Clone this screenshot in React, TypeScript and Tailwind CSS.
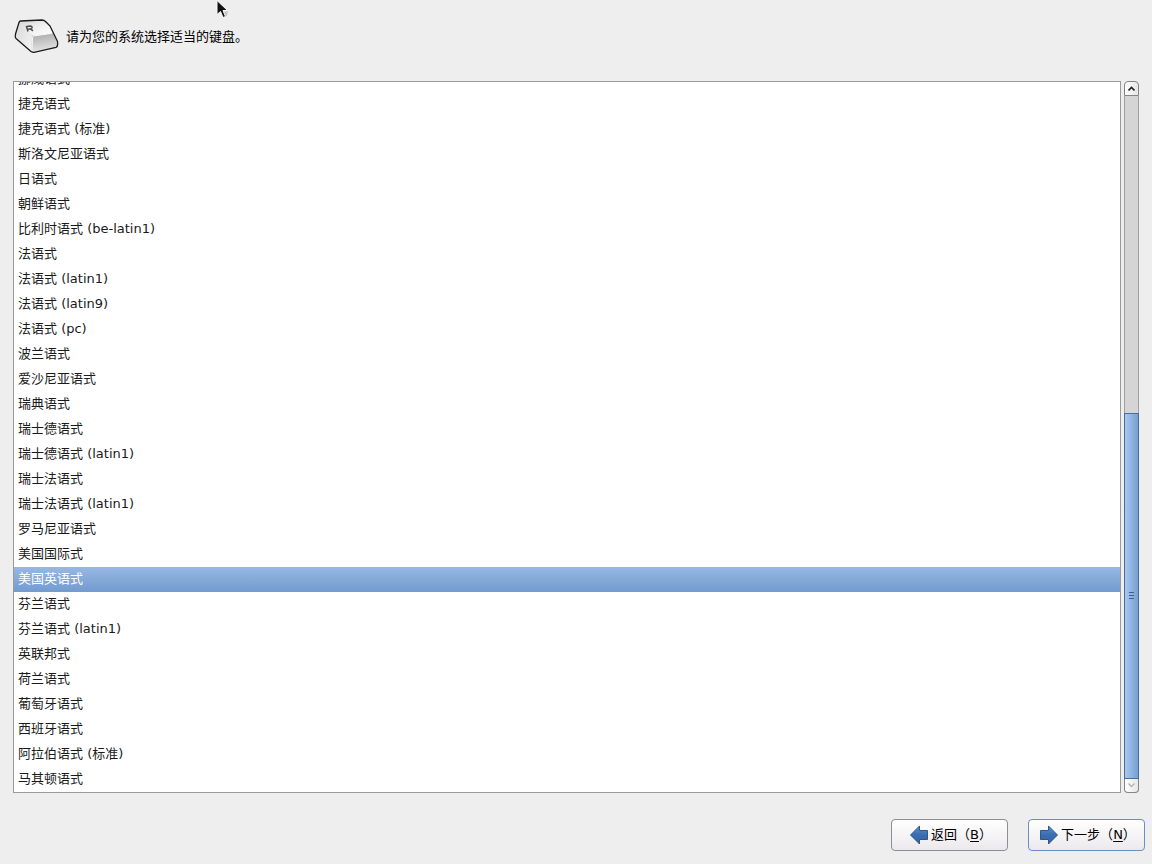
import { useState } from "react";
import { clsx } from "clsx";

const KEYBOARDS = [
  "挪威语式",
  "捷克语式",
  "捷克语式 (标准)",
  "斯洛文尼亚语式",
  "日语式",
  "朝鲜语式",
  "比利时语式 (be-latin1)",
  "法语式",
  "法语式 (latin1)",
  "法语式 (latin9)",
  "法语式 (pc)",
  "波兰语式",
  "爱沙尼亚语式",
  "瑞典语式",
  "瑞士德语式",
  "瑞士德语式 (latin1)",
  "瑞士法语式",
  "瑞士法语式 (latin1)",
  "罗马尼亚语式",
  "美国国际式",
  "美国英语式",
  "芬兰语式",
  "芬兰语式 (latin1)",
  "英联邦式",
  "荷兰语式",
  "葡萄牙语式",
  "西班牙语式",
  "阿拉伯语式 (标准)",
  "马其顿语式",
];

function KeycapIcon() {
  return (
    <svg width="45" height="36" viewBox="0 0 45 36" aria-hidden="true">
      <defs>
        <linearGradient id="cap-top" x1="0" y1="0" x2="1" y2="1">
          <stop offset="0" stopColor="#d6d6d6" />
          <stop offset="0.5" stopColor="#f0f0f0" />
          <stop offset="1" stopColor="#ffffff" />
        </linearGradient>
        <linearGradient id="cap-front" x1="0" y1="0" x2="0.2" y2="1">
          <stop offset="0" stopColor="#a8a8a8" />
          <stop offset="1" stopColor="#e4e4e4" />
        </linearGradient>
        <linearGradient id="cap-side" x1="0" y1="0" x2="1" y2="1">
          <stop offset="0" stopColor="#d8d8d8" />
          <stop offset="1" stopColor="#f4f4f4" />
        </linearGradient>
      </defs>
      <path d="M6.500 3 L28 2 Q30 2 31.500 3.500 L36 8 L43.500 23.500 Q44.200 28.500 42 29.300 L20 34.400 Q18.500 34.600 17 33.500 L2 20.500 Q0.800 19 1.500 16 L5 4.500 Q5.500 3.200 6.500 3Z" fill="#cfcfcf" />
      <path d="M5.500 4.500 L18 17.500 L17.500 33.500 L2 20.500 L1.500 16Z" fill="url(#cap-side)" />
      <path d="M6.500 3.500 L29 2.700 L36 8 L39 14 Q38.500 15 37 15.200 L20 17.500 Q18.500 17.500 17 16.500 L5.500 5.500Z" fill="url(#cap-top)" />
      <path d="M20 18 L37 15.600 Q39 15.200 39.800 17 L43 24.500 Q43.500 28 42 28.800 L19.500 34 L17.500 32.500 L18 20 Q18.500 18.200 20 18Z" fill="url(#cap-front)" />
      <path d="M18 33 L18.500 20 Q18.800 18 20.500 17.800 L38 15.400" fill="none" stroke="#fafafa" />
      <path
        d="M6.500 3 L28 2 Q30 2 31.500 3.500 L36 8 L43.500 23.500 Q44.200 28.500 42 29.300 L20 34.400 Q18.500 34.600 17 33.500 L2 20.500 Q0.800 19 1.500 16 L5 4.500 Q5.500 3.200 6.500 3Z"
        fill="none"
        stroke="#1c1c1c"
        strokeWidth="1.3"
        strokeLinejoin="round"
      />
      <path d="M14 13.500 L12.500 8.500 L16 8 Q18.500 8.200 18 10 Q17.500 11 13.500 11.200 M16.500 10.800 L19 12.800" fill="none" stroke="#4c4c4c" strokeWidth="1.5" />
    </svg>
  );
}

function ArrowIcon({ back = false }: { back?: boolean }) {
  return (
    <svg className={clsx("shrink-0", !back && "-scale-x-100")} width="20" height="20" viewBox="0 0 20 20" aria-hidden="true">
      <defs>
        <linearGradient id={back ? "arrow-back" : "arrow-next"} x1="0" y1="0" x2="0" y2="1">
          <stop offset="0" stopColor="#5b8fcd" />
          <stop offset="0.5" stopColor="#3a6cb0" />
          <stop offset="1" stopColor="#3465a4" />
        </linearGradient>
      </defs>
      <path
        d="M1.500 10 L10.500 1 V5.500 H18.500 V14.500 H10.500 V19Z"
        fill={back ? "url(#arrow-back)" : "url(#arrow-next)"}
        stroke="#2b578f"
        strokeLinejoin="round"
      />
    </svg>
  );
}

function ScrollBar() {
  return (
    <div className="flex w-[15px] shrink-0 flex-col">
      <button
        type="button"
        aria-label="向上滚动"
        className="flex h-[15px] items-center justify-center rounded-t border border-[#858585] bg-linear-to-r from-white to-[#e6e6e6]"
      >
        <svg width="7" height="5" viewBox="0 0 7 5">
          <path d="M0.500 4.500 L3.500 1.500 L6.500 4.500" fill="none" stroke="#222" strokeWidth="1.6" />
        </svg>
      </button>
      <div className="flex min-h-0 flex-1 flex-col justify-end border-x border-[#a0a0a0] bg-[#d5d5d5]">
        <div className="-mx-px flex h-[53.6%] flex-col items-center justify-center gap-0.5 border border-[#4a6d9c] bg-linear-to-r from-[#a9c8ee] to-[#769fd3]">
          <span className="h-px w-[5px] bg-[#3c5f91]" />
          <span className="h-px w-[5px] bg-[#3c5f91]" />
          <span className="h-px w-[5px] bg-[#3c5f91]" />
        </div>
      </div>
      <button
        type="button"
        aria-label="向下滚动"
        className="flex h-3.5 items-center justify-center rounded-b border border-t-0 border-[#858585] bg-linear-to-r from-white to-[#e6e6e6]"
      >
        <svg width="7" height="5" viewBox="0 0 7 5">
          <path d="M0.500 0.500 L3.500 3.500 L6.500 0.500" fill="none" stroke="#b5b5b5" strokeWidth="1.400" />
        </svg>
      </button>
    </div>
  );
}

function MousePointer() {
  return (
    <svg className="pointer-events-none absolute top-0 left-[216px]" width="14" height="19" viewBox="0 0 14 19" aria-hidden="true">
      <path d="M7.500 12 L12 11 L11 16 L9 17Z" fill="#c4c4c4" />
      <path d="M1 0.500 V14.500 L4.500 11.500 L7 17.500 L9.500 16.500 L7 10.500 H11.500Z" fill="#111" stroke="#f8f8f8" />
    </svg>
  );
}

export default function App() {
  const [selected, setSelected] = useState("美国英语式");

  return (
    <main className="relative flex h-screen flex-col bg-[#eeeeee] font-['DejaVu_Sans','Noto_Sans_CJK_SC',sans-serif] text-[13px] leading-5 text-[#1a1a1a]">
      <MousePointer />

      <header className="flex h-[81px] shrink-0 items-start gap-[7px] px-3.5 pt-[18px]">
        <KeycapIcon />
        <h1 id="keyboard-label" className="pt-[9px] text-black">请为您的系统选择适当的键盘。</h1>
      </header>

      <div className="flex min-h-0 flex-1 gap-[3px] px-[13px]">
        <div
          role="listbox"
          aria-labelledby="keyboard-label"
          className="flex min-w-0 flex-1 flex-col justify-end overflow-hidden border border-[#9a9a9a] bg-white"
        >
          {KEYBOARDS.map((name) => (
            <button
              key={name}
              type="button"
              role="option"
              aria-selected={name === selected}
              onClick={() => setSelected(name)}
              className={clsx(
                "h-[25px] shrink-0 px-1 pb-0.5 text-left",
                name === selected && "bg-linear-to-b from-[#97b8e2] to-[#729bd0] text-white"
              )}
            >
              {name}
            </button>
          ))}
        </div>
        <ScrollBar />
      </div>

      <footer className="flex h-[71px] shrink-0 items-start justify-end gap-5 px-[7px] pt-[26px]">
        <button
          type="button"
          className="flex h-8 w-[117px] items-center justify-center gap-0.5 rounded border border-[#8e8e96] bg-linear-to-b from-white to-[#ece9ec] pl-0.5 text-black"
        >
          <ArrowIcon back />
          <span>返回（<u className="underline-offset-2">B</u>）</span>
        </button>
        <button
          type="button"
          className="flex h-8 w-[117px] items-center justify-center gap-0.5 rounded border border-[#6b8fc4] bg-linear-to-b from-white to-[#ece9ec] pl-0.5 text-black"
        >
          <ArrowIcon />
          <span>下一步（<u className="underline-offset-2">N</u>）</span>
        </button>
      </footer>
    </main>
  );
}
